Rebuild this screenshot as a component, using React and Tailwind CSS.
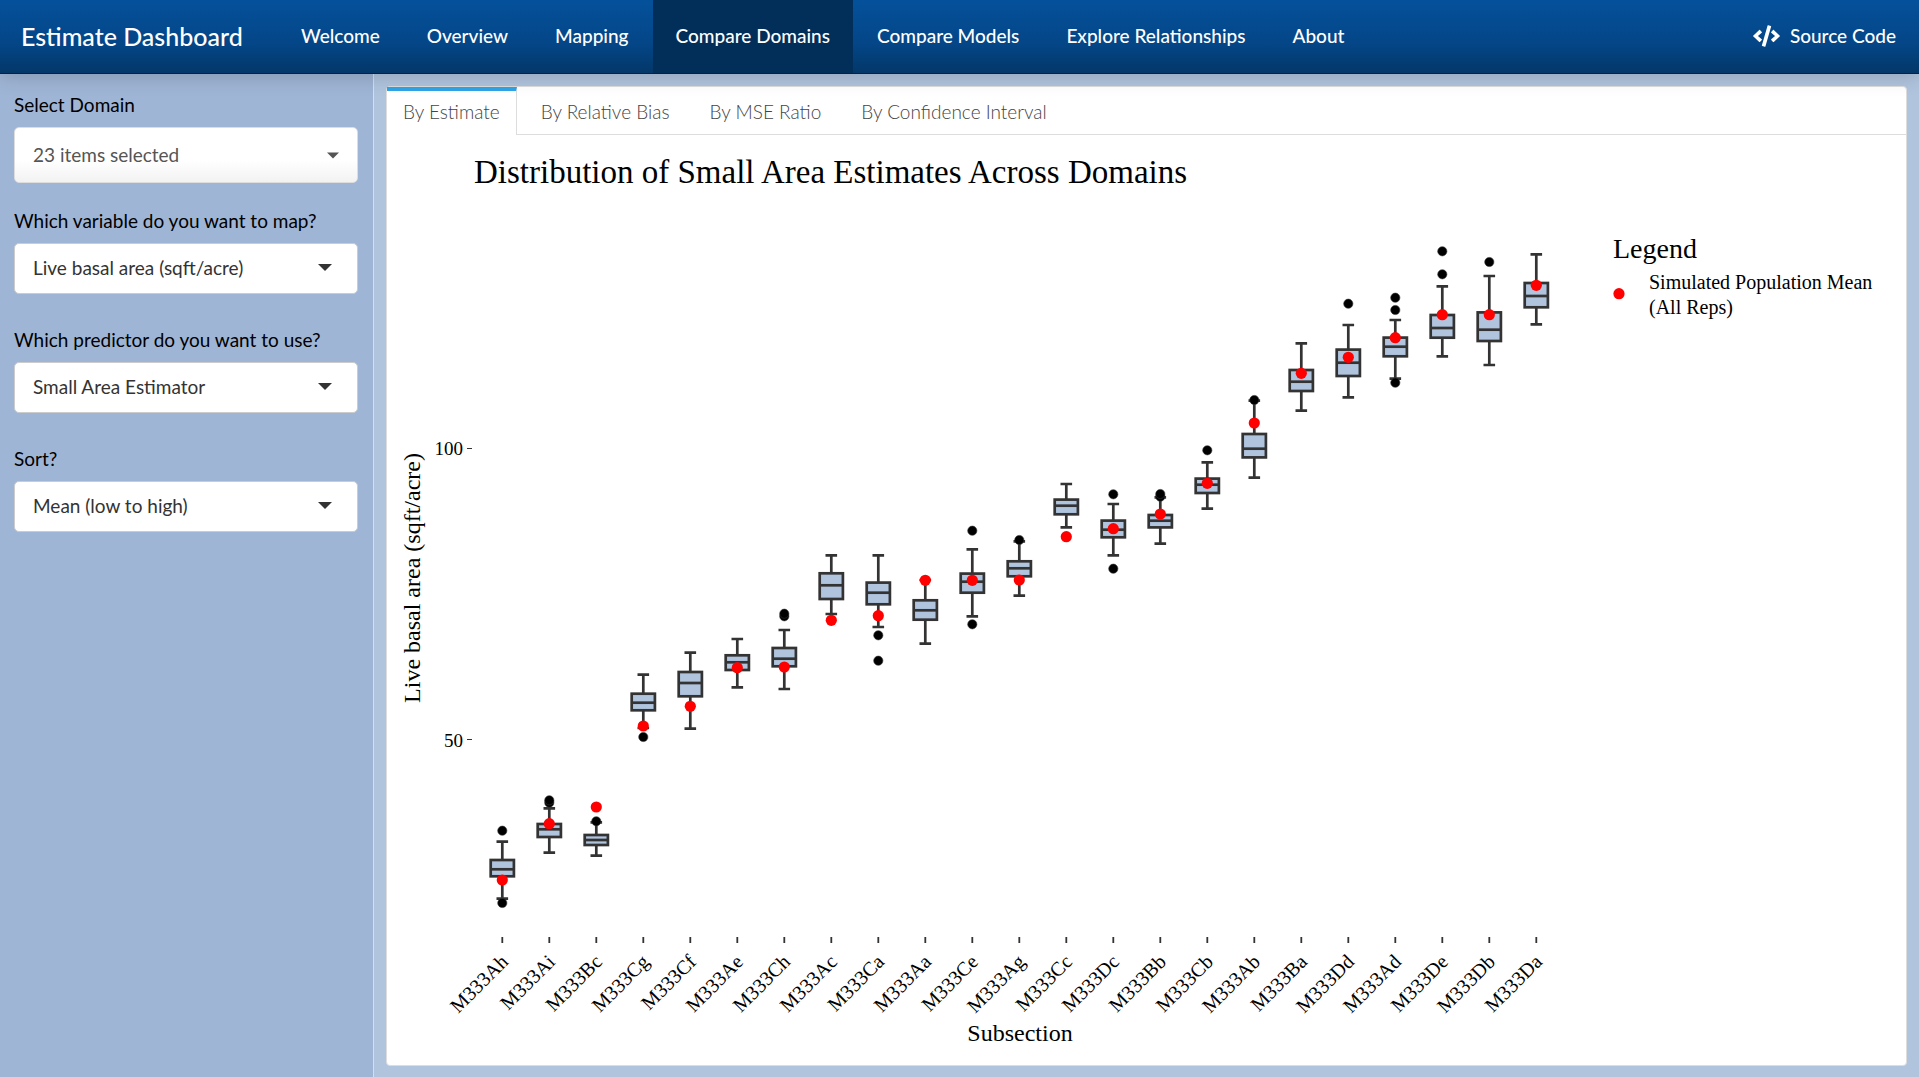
import React from "react";
import { FaCode } from "react-icons/fa";

const NAV = [
  "Welcome",
  "Overview",
  "Mapping",
  "Compare Domains",
  "Compare Models",
  "Explore Relationships",
  "About",
];

const TABS = ["By Estimate", "By Relative Bias", "By MSE Ratio", "By Confidence Interval"];

const SELECTS = [
  { id: "variable", label: "Which variable do you want to map?", value: "Live basal area (sqft/acre)" },
  { id: "predictor", label: "Which predictor do you want to use?", value: "Small Area Estimator" },
  { id: "sort", label: "Sort?", value: "Mean (low to high)" },
];

// name, upper whisker, q3, median, q1, lower whisker, population mean, outliers
const BOXES = [
  ["M333Ah", 841.7, 860, 869.3, 876.3, 898.7, 880, [830.7, 903]],
  ["M333Ai", 808.3, 824, 829.3, 837, 852.7, 823.7, [802.7, 800.3]],
  ["M333Bc", 822.3, 835, 840, 845, 855.7, 807, [821.3]],
  ["M333Cg", 674.7, 693.7, 702.7, 710.3, 728, 726, [737]],
  ["M333Cf", 652.7, 672, 683, 696.3, 728.7, 706.3, []],
  ["M333Ae", 639, 655.3, 662.3, 670, 687.3, 667.7, []],
  ["M333Ch", 630, 648, 658.7, 666.3, 689, 667, [616.3, 613.7]],
  ["M333Ac", 555.3, 573.3, 585.3, 599, 614, 620.3, []],
  ["M333Ca", 555.3, 582.6, 592.7, 604.3, 627, 615.7, [635.3, 660.7]],
  ["M333Aa", 580, 600.3, 610.3, 619.7, 643.7, 580.3, []],
  ["M333Ce", 549.3, 573.6, 581.7, 592.7, 616.3, 580.3, [530.7, 624.3]],
  ["M333Ag", 541.3, 561.3, 568.3, 576.3, 595.7, 580, [540]],
  ["M333Cc", 484, 499.6, 505.7, 514.3, 527.3, 536.7, []],
  ["M333Dc", 504, 520.6, 529.7, 537.3, 555.3, 528.7, [494.3, 568.7]],
  ["M333Bb", 497.3, 515, 520.7, 527.4, 543.7, 514, [496.7, 494]],
  ["M333Cb", 462.3, 478.6, 484.7, 493, 508.7, 483.3, [450.3]],
  ["M333Ab", 400.7, 434, 448.7, 457.4, 477.7, 423, [400]],
  ["M333Ba", 343.3, 370, 381.7, 391, 410.7, 373.3, []],
  ["M333Dd", 325, 349.6, 362.7, 376, 397.3, 357.3, [303.7]],
  ["M333Ad", 320, 337.6, 346.7, 356.3, 378.7, 337.7, [297.7, 310, 382.7]],
  ["M333De", 286.3, 315, 328, 337.7, 356.3, 314.7, [251.3, 274.3]],
  ["M333Db", 276, 312.4, 329.7, 341, 365, 314.7, [262]],
  ["M333Da", 254.3, 283, 296, 307.3, 324.3, 285.3, []],
];

function Chart() {
  return (
    <svg
      viewBox="387 135 1519 930"
      className="block h-auto w-full font-['Liberation_Serif',serif]"
      role="img"
      aria-label="Distribution of Small Area Estimates Across Domains"
    >
      <text x="474" y="183" fontSize="33">Distribution of Small Area Estimates Across Domains</text>
      <text x="420" y="578" fontSize="24" textAnchor="middle" transform="rotate(-90 420 578)">
        Live basal area (sqft/acre)
      </text>
      <text x="1020" y="1041" fontSize="24" textAnchor="middle">Subsection</text>
      <text x="463" y="455" fontSize="19" textAnchor="end">100</text>
      <text x="463" y="747" fontSize="19" textAnchor="end">50</text>
      <path d="M467 448.5h5M467 739.5h5" stroke="#333" strokeWidth="1" />
      {BOXES.map(([name, top, q3, median, q1, bottom, mean, outliers], i) => {
        const x = 502.3 + i * 47;
        return (
          <g key={name}>
            <path d={`M${x} 937v6`} stroke="#333" strokeWidth="1.8" />
            <text x={x + 7} y="963" fontSize="20" textAnchor="end" transform={`rotate(-45 ${x + 7} 963)`}>
              {name}
            </text>
            <path
              d={`M${x - 5.8} ${top}h11.6M${x} ${top}V${q3}M${x} ${q1}V${bottom}M${x - 5.8} ${bottom}h11.6`}
              stroke="#333"
              strokeWidth="2.7"
            />
            {outliers.map((y) => (
              <circle key={y} cx={x} cy={y} r="4.6" stroke="#333" strokeWidth="0.6" />
            ))}
            <rect x={x - 11.6} y={q3} width="23.2" height={q1 - q3} fill="#b0c4de" stroke="#333" strokeWidth="2.7" />
            <path d={`M${x - 11.6} ${median}h23.2`} stroke="#333" strokeWidth="2.7" />
            <circle cx={x} cy={mean} r="5.6" fill="#f00" />
          </g>
        );
      })}
      <text x="1613" y="258" fontSize="28">Legend</text>
      <circle cx="1619" cy="293.7" r="5.6" fill="#f00" />
      <text x="1649" y="289" fontSize="20">Simulated Population Mean</text>
      <text x="1649" y="314" fontSize="20">(All Reps)</text>
    </svg>
  );
}

function Caret({ className }) {
  return (
    <svg viewBox="0 0 14 7" className={className} aria-hidden="true">
      <path d="M0 0h14l-7 7z" fill="currentColor" />
    </svg>
  );
}

export default function App() {
  return (
    <div className="flex min-h-screen flex-col bg-[#b0c4de] font-['Lato',sans-serif] text-[19px] leading-6 text-black">
      <header className="relative z-10 flex h-[74px] items-stretch border-b border-[#022241] bg-linear-to-b from-[#04519b] via-[#044687] via-60% to-[#033769] font-medium text-white shadow-[0_1px_20px_rgba(0,0,0,0.2)]">
        <a href="#home" className="flex w-[278px] shrink-0 items-center pb-0.5 pl-[21px] text-[25px]">
          Estimate Dashboard
        </a>
        <nav className="flex gap-px">
          {NAV.map((item) => (
            <a
              key={item}
              href="#page"
              className={
                item === "Compare Domains"
                  ? "flex items-center bg-[#022f5a] px-[23px] pb-0.5"
                  : "flex items-center px-[23px] pb-0.5"
              }
            >
              {item}
            </a>
          ))}
        </nav>
        <a href="#source" className="ml-auto flex items-center gap-[10px] pr-[23px] pb-0.5">
          <FaCode className="h-[22px] w-[27px]" />
          Source Code
        </a>
      </header>

      <div className="flex flex-1">
        <aside className="w-[374px] shrink-0 border-r border-[#d3dfee] bg-[#9fb5d5] pt-[19px] pr-[15px] pl-[14px]">
          <div className="mb-[26px]">
            <label htmlFor="domain" className="mb-[10px] block">Select Domain</label>
            <button
              id="domain"
              type="button"
              className="flex h-[56px] w-full items-center justify-between rounded-[5px] border border-[#dddddd] bg-linear-to-b from-white via-white via-60% to-[#f2f2f2] pr-[18px] pl-[18px] text-[#555555]"
            >
              23 items selected
              <Caret className="h-[7px] w-[12px]" />
            </button>
          </div>
          {SELECTS.map((s) => (
            <div key={s.id} className="mb-[34px]">
              <label htmlFor={s.id} className="mb-[10px] block">{s.label}</label>
              <div className="relative">
                <select
                  id={s.id}
                  className="block h-[51px] w-full appearance-none rounded-[5px] border border-[#cccccc] bg-white px-[18px] pb-0.5 text-[#333333]"
                >
                  <option>{s.value}</option>
                </select>
                <Caret className="pointer-events-none absolute top-[21px] right-[26px] h-[7px] w-[14px] text-[#333333]" />
              </div>
            </div>
          ))}
        </aside>

        <main className="min-w-0 flex-1 px-3 pt-3 pb-[11px]">
          <section className="rounded-[4px] border border-[#dddddd] bg-white">
            <div role="tablist" className="flex h-[48px] font-light text-[#444444]">
              {TABS.map((tab, i) =>
                i === 0 ? (
                  <React.Fragment key={tab}>
                    <button
                      type="button"
                      role="tab"
                      aria-selected="true"
                      className="border-t-4 border-r border-t-[#2fa4e7] border-r-[#dddddd] px-4 pb-0.5"
                    >
                      {tab}
                    </button>
                    <div className="w-1 border-b border-[#dddddd]" />
                  </React.Fragment>
                ) : (
                  <button
                    key={tab}
                    type="button"
                    role="tab"
                    aria-selected="false"
                    className="border-b border-[#dddddd] px-5 pt-[3px]"
                  >
                    {tab}
                  </button>
                )
              )}
              <div className="flex-1 border-b border-[#dddddd]" />
            </div>
            <Chart />
          </section>
        </main>
      </div>
    </div>
  );
}
